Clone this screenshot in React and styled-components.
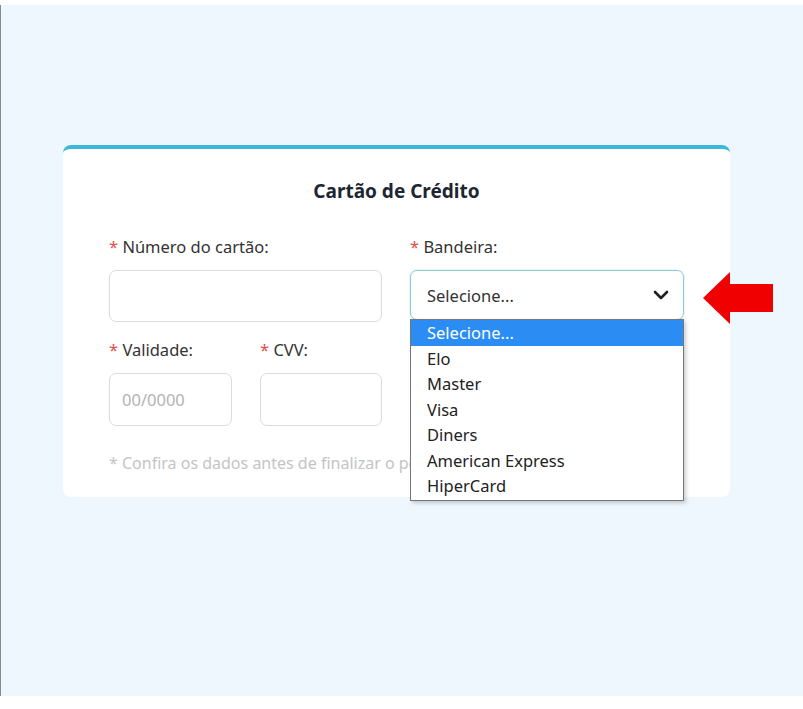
import React from "react";
import styled, { createGlobalStyle } from "styled-components";

const options = ["Selecione...", "Elo", "Master", "Visa", "Diners", "American Express", "HiperCard"];

const App = () => {
  return (
    <>
      <GlobalStyle />
      <Screen>
        <Card>
          <Title>Cartão de Crédito</Title>
          <Row>
            <Field>
              <Label>
                <Star>*</Star> Número do cartão:
              </Label>
              <Input type="text" />
            </Field>
            <Field>
              <Label>
                <Star>*</Star> Bandeira:
              </Label>
              <SelectWrap>
                <SelectBox>
                  <span>Selecione...</span>
                  <Chevron viewBox="0 0 16 10">
                    <polyline points="2,2 8,8 14,2" />
                  </Chevron>
                </SelectBox>
                <OptionList>
                  {options.map((o, i) => (
                    <Option key={o} active={i === 0}>
                      {o}
                    </Option>
                  ))}
                </OptionList>
                <Arrow viewBox="0 0 70 52">
                  <polygon points="0,26 27,0 27,12 70,12 70,40 27,40 27,52" />
                </Arrow>
              </SelectWrap>
            </Field>
          </Row>
          <SmallRow>
            <Field>
              <Label>
                <Star>*</Star> Validade:
              </Label>
              <Input type="text" placeholder="00/0000" small />
            </Field>
            <Field>
              <Label>
                <Star>*</Star> CVV:
              </Label>
              <Input type="text" small />
            </Field>
          </SmallRow>
          <Note>* Confira os dados antes de finalizar o pedido.</Note>
        </Card>
      </Screen>
    </>
  );
};

// Styles ***************************
const GlobalStyle = createGlobalStyle`
  body {
    margin: 0;
    background: #fff;
    font-family: "Noto Sans", "Open Sans", sans-serif;
  }
`;

const Screen = styled.div`
  margin-top: 5px;
  height: 691px;
  background: #eef7fd;
  border-left: 1px solid #8a8a8a;
  padding: 140px 0 0 62px;
  box-sizing: border-box;
`;

const Card = styled.div`
  width: 667px;
  box-sizing: border-box;
  background: #fff;
  border-top: 4px solid #3bb8da;
  border-radius: 8px;
  padding: 29px 46px 23px;
`;

const Title = styled.h2`
  margin: 0 0 32px;
  text-align: center;
  font-size: 19px;
  line-height: 26px;
  font-weight: 700;
  color: #1d2631;
`;

const Row = styled.div`
  display: grid;
  grid-template-columns: 273px 274px;
  column-gap: 28px;
`;

const SmallRow = styled.div`
  display: grid;
  grid-template-columns: 123px 122px;
  column-gap: 28px;
  margin-top: 17px;
`;

const Field = styled.div`
  display: flex;
  flex-direction: column;
  gap: 12px;
`;

const Label = styled.label`
  font-size: 16.5px;
  line-height: 22px;
  color: #333;
`;

const Star = styled.span`
  color: #e0514f;
`;

const Input = styled.input`
  height: ${({ small }) => (small ? "53px" : "52px")};
  box-sizing: border-box;
  border: 1px solid #dcdcdc;
  border-radius: 7px;
  padding: 0 12px;
  font-family: inherit;
  font-size: 16.5px;
  outline: none;

  &::placeholder {
    color: #b3b3b3;
  }
`;

const SelectWrap = styled.div`
  position: relative;
`;

const SelectBox = styled.div`
  height: 50px;
  box-sizing: border-box;
  border: 1px solid #8ccbd8;
  border-radius: 7px;
  display: flex;
  align-items: center;
  justify-content: space-between;
  padding: 0 14px 0 16px;
  font-size: 16.5px;
  color: #333;
  box-shadow: 0 0 0 1px rgba(59, 184, 218, 0.12);
`;

const Chevron = styled.svg`
  width: 16px;
  height: 10px;
  fill: none;
  stroke: #1f1f1f;
  stroke-width: 2.6;
  stroke-linecap: round;
  stroke-linejoin: round;
`;

const OptionList = styled.ul`
  position: absolute;
  top: 49px;
  left: 0;
  width: 274px;
  box-sizing: border-box;
  margin: 0;
  padding: 0 0 1px;
  list-style: none;
  background: #fff;
  border: 1px solid #767676;
  box-shadow: 2px 2px 4px rgba(0, 0, 0, 0.2);
  z-index: 2;
`;

const Option = styled.li`
  height: 25.5px;
  line-height: 25.5px;
  padding-left: 16px;
  font-size: 16.5px;
  color: ${({ active }) => (active ? "#fff" : "#222")};
  background: ${({ active }) => (active ? "#2b8cf3" : "transparent")};
`;

const Arrow = styled.svg`
  position: absolute;
  left: calc(100% + 19px);
  top: 2px;
  width: 70px;
  height: 52px;
  fill: #f00000;
`;

const Note = styled.p`
  margin: 26px 0 0;
  font-size: 16px;
  line-height: 22px;
  color: #c4c4c4;
`;

export default App;
